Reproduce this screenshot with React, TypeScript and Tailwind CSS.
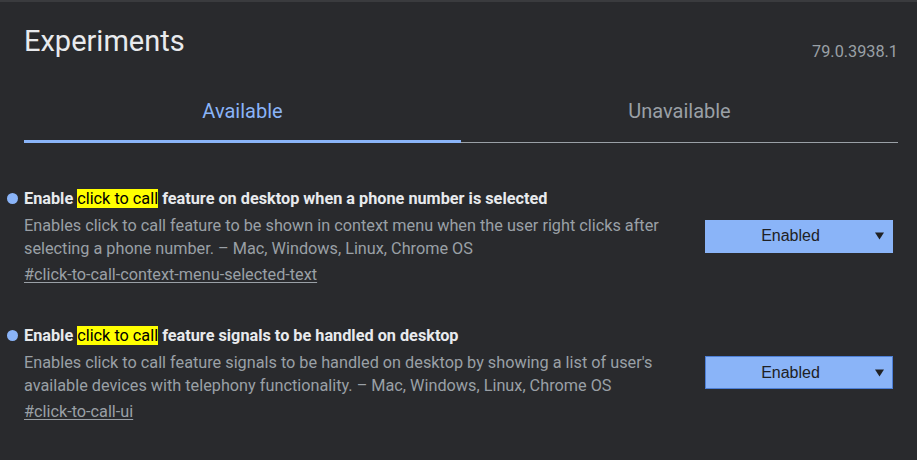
import React from "react";

interface Flag {
  before: string;
  after: string;
  description: string;
  link: string;
  focused?: boolean;
}

const flags: Flag[] = [
  {
    before: "Enable ",
    after: " feature on desktop when a phone number is selected",
    description:
      "Enables click to call feature to be shown in context menu when the user right clicks after selecting a phone number. – Mac, Windows, Linux, Chrome OS",
    link: "#click-to-call-context-menu-selected-text",
  },
  {
    before: "Enable ",
    after: " feature signals to be handled on desktop",
    description:
      "Enables click to call feature signals to be handled on desktop by showing a list of user's available devices with telephony functionality. – Mac, Windows, Linux, Chrome OS",
    link: "#click-to-call-ui",
    focused: true,
  },
];

const FlagRow = ({ flag }: { flag: Flag }) => (
  <div className="relative flex items-center gap-[21px]">
    <span className="absolute -left-[17px] top-[4px] size-[11px] rounded-full bg-[#8ab4f8]" />
    <div className="flex-1">
      <h2 className="text-[16.25px] font-bold leading-[20px] text-[#e8eaed]">
        {flag.before}
        <span className="bg-[#ffff00] font-normal text-black">click to call</span>
        {flag.after}
      </h2>
      <p className="mt-[5px] text-[16.25px] leading-[23px] text-[#9aa0a6]">
        {flag.description}
      </p>
      <a
        href={flag.link}
        className="mt-[3px] block text-[16.25px] leading-[23px] text-[#9aa0a6] underline underline-offset-2"
      >
        {flag.link}
      </a>
    </div>
    <div
      className={
        flag.focused
          ? "mr-[5px] -mt-[3px] flex h-[33px] w-[188px] items-center border border-[#4d7fd6] bg-[#8ab4f8] text-[#202124]"
          : "mr-[5px] -mt-[3px] flex h-[33px] w-[188px] items-center border border-[#8ab4f8] bg-[#8ab4f8] text-[#202124]"
      }
      style={{ fontFamily: '"Liberation Sans", Arial, sans-serif' }}
    >
      <span className="flex-1 text-center text-[16px]">Enabled</span>
      <svg viewBox="0 0 10 8" className="mr-[8px] h-[8px] w-[9px] fill-[#202124]">
        <path d="M0 0h10L5 8z" />
      </svg>
    </div>
  </div>
);

export default function App() {
  return (
    <div
      className="h-[460px] w-[917px] overflow-hidden border-t-2 border-[#3a3b3e] bg-[#292a2d] pl-[24px] pr-[19px] pt-[22px]"
      style={{ fontFamily: "Roboto, Arial, sans-serif" }}
    >
      <div className="flex h-[34px] items-start justify-between">
        <h1 className="text-[29px] font-normal leading-[34px] text-[#e8eaed]">Experiments</h1>
        <span className="mt-[18px] text-[16.25px] leading-[20px] text-[#9aa0a6]">79.0.3938.1</span>
      </div>

      <div className="mt-[41px] flex items-end">
        <div className="flex-1 border-b-[3px] border-[#8ab4f8] pb-[17px] text-center text-[20px] leading-[24px] text-[#8ab4f8]">
          Available
        </div>
        <div className="flex-1 border-b border-[#9aa0a6] pb-[19px] text-center text-[20px] leading-[24px] text-[#9aa0a6]">
          Unavailable
        </div>
      </div>

      <div className="mt-[46px] flex flex-col gap-[39.5px]">
        {flags.map((f) => (
          <FlagRow key={f.link} flag={f} />
        ))}
      </div>
    </div>
  );
}
